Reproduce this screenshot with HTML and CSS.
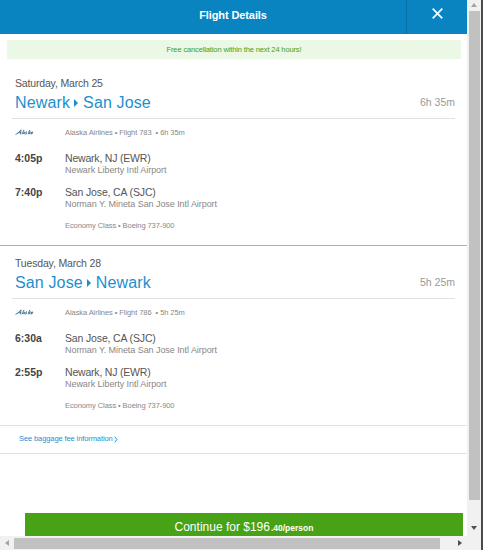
FILE: index.html
```html
<!DOCTYPE html>
<html lang="en">
<head>
  <meta charset="UTF-8" />
  <meta name="viewport" content="width=device-width, initial-scale=1.0" />
  <title>Flight Details</title>
  <link rel="stylesheet" href="styles.css">
</head>
<body>
  <div class="window">
    <main class="page">
      <header class="header">
        <h1>Flight Details</h1>
        <button class="close" aria-label="Close">
          <svg width="11" height="11" viewBox="0 0 11 11"><path d="M.7 .7L10.3 10.3M10.3 .7L.7 10.3" stroke="#fff" stroke-width="1.7" fill="none"/></svg>
        </button>
      </header>
      <div class="notice"><span>Free cancellation within the next 24 hours!</span></div>

      <section class="trip">
        <p class="date">Saturday, March 25</p>
        <div class="route">
          <h2>Newark<i class="arrow"></i>San Jose</h2>
          <span class="duration">6h 35m</span>
        </div>
        <div class="row meta">
          <svg class="airline" viewBox="0 0 19 8"><path d="M.5 6.5Q3.5 5.5 6 1.8L5.5 6.3M2.8 4.7H6.2M7 6.3L9 1.8M8.7 6.1Q8 4 10 4L9.7 6.2M12 3.7Q10 4 11.7 5.2Q11 6.7 10.3 6M13.1 6.3L14.8 2M16 3.7L13.8 5L15.2 6.2M17 3.9Q15.4 5 16.3 6Q17.6 6 17.8 4.1Q16.3 3.4 16.3 6" fill="none" stroke="#4a7b9b" stroke-width="1"/></svg>
          <span class="flight">Alaska Airlines • Flight 783 &nbsp;• 6h 35m</span>
        </div>
        <div class="row stop">
          <b class="time">4:05p</b>
          <div>
            <p class="city newark">Newark, NJ (EWR)</p>
            <p class="airport">Newark Liberty Intl Airport</p>
          </div>
        </div>
        <div class="row stop">
          <b class="time">7:40p</b>
          <div>
            <p class="city">San Jose, CA (SJC)</p>
            <p class="airport">Norman Y. Mineta San Jose Intl Airport</p>
          </div>
        </div>
        <p class="cabin">Economy Class • Boeing 737-900</p>
      </section>

      <section class="trip last">
        <p class="date">Tuesday, March 28</p>
        <div class="route">
          <h2>San Jose<i class="arrow"></i>Newark</h2>
          <span class="duration">5h 25m</span>
        </div>
        <div class="row meta">
          <svg class="airline" viewBox="0 0 19 8"><path d="M.5 6.5Q3.5 5.5 6 1.8L5.5 6.3M2.8 4.7H6.2M7 6.3L9 1.8M8.7 6.1Q8 4 10 4L9.7 6.2M12 3.7Q10 4 11.7 5.2Q11 6.7 10.3 6M13.1 6.3L14.8 2M16 3.7L13.8 5L15.2 6.2M17 3.9Q15.4 5 16.3 6Q17.6 6 17.8 4.1Q16.3 3.4 16.3 6" fill="none" stroke="#4a7b9b" stroke-width="1"/></svg>
          <span class="flight">Alaska Airlines • Flight 786 &nbsp;• 5h 25m</span>
        </div>
        <div class="row stop">
          <b class="time">6:30a</b>
          <div>
            <p class="city">San Jose, CA (SJC)</p>
            <p class="airport">Norman Y. Mineta San Jose Intl Airport</p>
          </div>
        </div>
        <div class="row stop">
          <b class="time">2:55p</b>
          <div>
            <p class="city newark">Newark, NJ (EWR)</p>
            <p class="airport">Newark Liberty Intl Airport</p>
          </div>
        </div>
        <p class="cabin">Economy Class • Boeing 737-900</p>
      </section>

      <a class="baggage">See baggage fee information<svg width="4" height="7" viewBox="0 0 4 7"><path d="M.7 .7L3 3.5L.7 6.3" fill="none" stroke="#1c8fcf" stroke-width="1"/></svg></a>
      <button class="continue"><span>Continue for $196<small>.40/person</small></span></button>
    </main>

    <div class="scroll-y">
      <i class="up"></i>
      <div class="thumb"></div>
      <i class="down"></i>
    </div>
    <div class="scroll-x">
      <i class="left"></i>
      <div class="thumb"></div>
      <i class="right"></i>
    </div>
    <div class="edge"></div>
  </div>
</body>
</html>
```
FILE: styles.css
```css
:root {
  --blue: #0a84c1;
  --link: #1c8fcf;
  --green: #47a216;
  --track: #f1f1f1;
  --thumb: #c1c1c1;
}
* {
  box-sizing: border-box;
}
body {
  margin: 0;
  font-family: "Liberation Sans", Arial, sans-serif;
  background: white;
  overflow: hidden;
}
h1, h2, p {
  margin: 0;
  font-weight: normal;
}
button {
  border: none;
  padding: 0;
  font-family: inherit;
  color: white;
}
.window {
  display: grid;
  grid-template-columns: 467px 14px 2px;
  grid-template-rows: 536px 14px;
  width: 483px;
  height: 550px;
}
.page {
  display: flex;
  flex-direction: column;
  overflow: hidden;
}
.header {
  display: flex;
  flex: none;
  height: 34px;
  background: var(--blue);
}
.header h1 {
  flex: 1;
  padding-left: 60px;
  line-height: 30px;
  text-align: center;
  font-size: 11px;
  font-weight: bold;
  letter-spacing: -0.1px;
  color: white;
}
.close {
  display: flex;
  justify-content: center;
  width: 61px;
  padding-top: 8px;
  background: var(--blue);
  border-left: 1px solid #0870a8;
}
.notice {
  flex: none;
  height: 19px;
  margin: 6px 6px 7px 7px;
  line-height: 20px;
  text-align: center;
  font-size: 7.5px;
  letter-spacing: -0.13px;
  color: #3ba316;
  background: #eaf8e5;
}
.trip {
  flex: none;
  height: 180px;
  padding: 10px 12px 0;
  border-bottom: 1px solid #7dbfe5;
}
.trip.last {
  border-color: #e2e2e2;
}
.date {
  padding-left: 3px;
  line-height: 14px;
  font-size: 10.5px;
  letter-spacing: -0.17px;
  color: #555;
}
.route {
  display: flex;
  justify-content: space-between;
  height: 29px;
  padding-left: 3px;
  line-height: 25px;
  border-bottom: 1px solid #e2e2e2;
}
.route h2 {
  font-size: 16px;
  letter-spacing: 0.14px;
  color: var(--link);
}
.arrow {
  display: inline-block;
  margin: 0 5px 1px 4px;
  border: solid transparent;
  border-width: 4px 0 4px 4px;
  border-left-color: var(--link);
}
.duration {
  font-size: 10.5px;
  color: #999;
}
.row {
  display: flex;
  padding-left: 3px;
}
.meta {
  height: 33px;
  align-items: flex-start;
}
.airline {
  width: 19px;
  height: 8px;
  margin: 9px 31px 0 0;
}
.flight {
  line-height: 27px;
  font-size: 7.5px;
  letter-spacing: -0.07px;
  color: #888;
}
.stop {
  height: 33.5px;
}
.time {
  width: 50px;
  line-height: 13px;
  font-size: 10.5px;
  color: #444;
}
.city {
  line-height: 13px;
  font-size: 10.5px;
  letter-spacing: -0.15px;
  color: #555;
}
.city.newark {
  letter-spacing: -0.2px;
}
.airport {
  line-height: 11px;
  font-size: 9px;
  letter-spacing: -0.06px;
  color: #888;
}
.cabin {
  padding-left: 53px;
  line-height: 14px;
  font-size: 7.5px;
  letter-spacing: -0.08px;
  color: #888;
}
.baggage {
  display: flex;
  flex: none;
  align-items: center;
  height: 28px;
  padding: 0 0 2px 19px;
  font-size: 7.5px;
  letter-spacing: -0.1px;
  color: var(--link);
  border-bottom: 1px solid #e2e2e2;
}
.baggage svg {
  margin: 2px 0 0 1px;
}
.continue {
  flex: none;
  height: 40px;
  margin: 59px 4px 0 25px;
  padding-bottom: 12px;
  font-size: 12px;
  background: var(--green);
}
.continue small {
  margin-left: 1px;
  font-size: 8.5px;
  font-weight: bold;
}
.scroll-y, .scroll-x {
  display: flex;
  align-items: center;
  background: var(--track);
}
.scroll-y {
  flex-direction: column;
  grid-column: 2;
}
.scroll-x {
  grid-column: 1 / 3;
  grid-row: 2;
}
.scroll-y .thumb {
  width: 11px;
  height: 489px;
  margin-top: 4px;
  background: var(--thumb);
}
.scroll-x .thumb {
  width: 426px;
  height: 11px;
  margin-left: 5px;
  background: var(--thumb);
}
.scroll-y i, .scroll-x i {
  border: 3px solid transparent;
}
.scroll-y .up {
  margin-top: 3px;
  border-width: 0 3px 4px;
  border-bottom-color: #a3a3a3;
}
.scroll-y .down {
  margin-top: 26px;
  border-width: 4px 3px 0;
  border-top-color: #505050;
}
.scroll-x .left {
  margin-left: 5px;
  border-width: 3px 4px 3px 0;
  border-right-color: #a3a3a3;
}
.scroll-x .right {
  margin-left: 18px;
  border-width: 3px 0 3px 4px;
  border-left-color: #505050;
}
.edge {
  grid-column: 3;
  grid-row: 1 / 3;
  background: #4b4b4d;
}
```
